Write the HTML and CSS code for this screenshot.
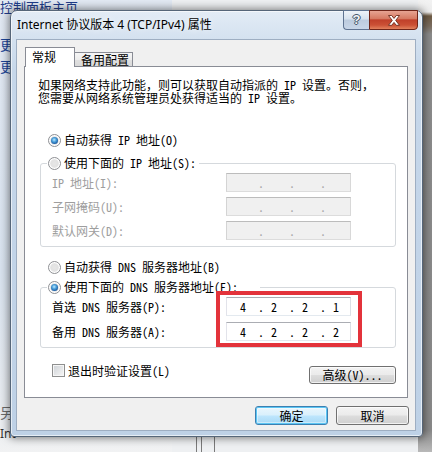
FILE: index.html
```html
<!DOCTYPE html>
<html>
<head>
<meta charset="utf-8">
<link rel="stylesheet" href="styles.css">
</head>
<body>
<div class="side">
  <div class="slink top">控制面板主页</div>
  <div class="slink l1">更</div>
  <div class="slink l2">更</div>
  <div class="slink l3">另</div>
  <div class="slink l4">Int</div>
</div>
<div class="rstrip"></div>
<div class="bline b1"></div>
<div class="bline b2"></div>
<div class="bline b3"></div>

<div class="win">
  <div class="titlebar">
    <span class="title">Internet 协议版本 4 (TCP/IPv4) 属性</span>
    <div class="caps">
      <div class="cap help">?</div>
      <div class="cap close">
        <svg width="14" height="11" viewBox="0 0 14 11"><path d="M1.5 0.5h3.2l2.3 2.9 2.3-2.9h3.2l-3.8 4.9 3.8 4.9h-3.2l-2.3-2.9-2.3 2.9h-3.2l3.8-4.9z" fill="#fff" stroke="#6a2a1c" stroke-width="0.9" stroke-linejoin="round"/></svg>
      </div>
    </div>
  </div>
  <div class="client">
    <div class="tabs">
      <div class="tab on">常规</div>
      <div class="tab">备用配置</div>
    </div>
    <div class="panel">
      <p class="desc">如果网络支持此功能，则可以获取自动指派的 IP 设置。否则，<br>您需要从网络系统管理员处获得适当的 IP 设置。</p>

      <div class="opt r1"><span class="radio on"></span><span>自动获得 IP 地址(O)</span></div>

      <div class="group">
        <div class="legend"><span class="radio"></span><span>使用下面的 IP 地址(S):</span></div>
        <div class="field first"><span class="lbl dim">IP 地址(I):</span>
          <span class="ip dis"><span class="n"></span><span class="d">.</span><span class="n"></span><span class="d">.</span><span class="n"></span><span class="d">.</span><span class="n"></span></span></div>
        <div class="field"><span class="lbl dim">子网掩码(U):</span>
          <span class="ip dis"><span class="n"></span><span class="d">.</span><span class="n"></span><span class="d">.</span><span class="n"></span><span class="d">.</span><span class="n"></span></span></div>
        <div class="field"><span class="lbl dim">默认网关(D):</span>
          <span class="ip dis"><span class="n"></span><span class="d">.</span><span class="n"></span><span class="d">.</span><span class="n"></span><span class="d">.</span><span class="n"></span></span></div>
      </div>

      <div class="opt r2"><span class="radio"></span><span>自动获得 DNS 服务器地址(B)</span></div>

      <div class="group g2">
        <div class="legend wide"><span class="radio on"></span><span>使用下面的 DNS 服务器地址(E):</span></div>
        <div class="field first"><span class="lbl">首选 DNS 服务器(P):</span>
          <span class="ip"><span class="n">4</span><span class="d">.</span><span class="n">2</span><span class="d">.</span><span class="n">2</span><span class="d">.</span><span class="n">1</span></span></div>
        <div class="field"><span class="lbl">备用 DNS 服务器(A):</span>
          <span class="ip"><span class="n">4</span><span class="d">.</span><span class="n">2</span><span class="d">.</span><span class="n">2</span><span class="d">.</span><span class="n">2</span></span></div>
        <div class="mark"></div>
      </div>

      <div class="checkrow">
        <span class="check"></span><span class="ctext">退出时验证设置(L)</span>
        <div class="btn adv">高级(V)...</div>
      </div>
    </div>
    <div class="btns">
      <div class="btn def">确定</div>
      <div class="btn">取消</div>
    </div>
  </div>
</div>
</body>
</html>
```

FILE: styles.css
```css
* { box-sizing: border-box; margin: 0; padding: 0; }
html, body { width: 432px; height: 452px; overflow: hidden; }
body {
  position: relative;
  background: #eef0f2;
  font: 12px/12px "Noto Sans Mono CJK SC", "Noto Sans CJK SC", sans-serif;
  color: #000;
}

/* desktop behind the dialog */
.side {
  position: absolute; left: 0; top: 0; width: 172px; height: 452px;
  background: linear-gradient(#e2e9f3, #d8e2ee 60%, #e6eaef 88%, #f1f2f3);
}
.slink { position: absolute; white-space: nowrap; font: 14px/16px "Noto Sans CJK SC", sans-serif; color: #1c4597; }
.slink.top { left: 0; top: 0; font-size: 13px; line-height: 13px; color: #1e3c8a; }
.slink.l1 { left: 0; top: 36px; }
.slink.l2 { left: 0; top: 58px; }
.slink.l3 { left: 0; top: 404px; color: #6a6a6a; }
.slink.l4 { left: 0; top: 427px; color: #333; font: 12px/14px "Noto Sans", sans-serif; }
.rstrip {
  position: absolute; left: 418px; top: 0; width: 14px; height: 452px;
  background: linear-gradient(#f2f2f2 0, #eeeeee 12px, #6e5b44 16px, #7c6e60 26px, #8c8c8c 34px, #8a8a8a 430px, #b9b9b9 452px);
}
.bline { position: absolute; top: 436px; width: 1px; height: 16px; background: #7a7a7a; }
.bline.b1 { left: 196px; }
.bline.b2 { left: 201px; }
.bline.b3 { left: 214px; }

/* window frame */
.win {
  position: absolute; left: 10px; top: 10px; width: 413px; height: 427px;
  border: 1px solid #566679;
  border-radius: 7px 7px 4px 4px;
  background: linear-gradient(180deg, #e3ecf6 0, #d5e2f0 26px, #c6d7ea 60px, #bed1e6 100%);
  box-shadow: 0 0 9px 1px rgba(0, 0, 0, .5), inset 0 0 0 1px rgba(255, 255, 255, .6);
  padding: 0 6px 5px 5px;
  display: flex; flex-direction: column;
}
.titlebar { height: 28px; display: flex; align-items: center; padding-left: 1px; }
.title {
  font: 12px/14px "Noto Sans", "Noto Sans CJK SC", sans-serif;
  color: #000; white-space: nowrap;
  text-shadow: 0 0 6px rgba(255, 255, 255, .95);
}
.caps {
  display: flex; align-self: flex-start;
  margin: -1px -2px 0 auto;
}
.cap { height: 20px; display: flex; align-items: center; justify-content: center; }
.help {
  width: 26px;
  border: 1px solid #5f7391; border-right: none;
  border-radius: 0 0 0 4px;
  background: linear-gradient(#eef3f9, #d6e1ee 45%, #bccbde 50%, #c8d6e8);
  font: bold 13px/14px "Liberation Sans", sans-serif; color: #f4f6f8;
  text-shadow: 0 0 1px #2e3e52, 1px 0 0 #4a5b70, -1px 0 0 #4a5b70, 0 1px 0 #4a5b70, 0 -1px 0 #4a5b70;
}
.close {
  width: 49px;
  border: 1px solid #6f2519;
  border-radius: 0 0 4px 0;
  background-color: #c8503a;
  background-image: linear-gradient(#e7a493, #d67a63 42%, #c0402a 50%, #cb5035 78%, #e2825e);
}

/* client area */
.client {
  flex: 1;
  border: 1px solid #9eaec2;
  background: #f0f0f0;
  padding: 7px 6px 0 7px;
  display: flex; flex-direction: column;
}
.tabs { display: flex; align-items: flex-end; height: 20px; }
.tab {
  height: 15px; width: 59px; margin-left: -1px;
  border: 1px solid #898c95; border-bottom: none;
  background: linear-gradient(#f6f6f6, #ececec 50%, #e0e0e0 50%, #d8d8d8);
  padding-left: 6px; line-height: 14px; white-space: nowrap;
}
.tab.on {
  position: relative; z-index: 2;
  height: 20px; width: 50px; margin-left: 1px;
  background: #fff; line-height: 18px;
}
.panel {
  position: relative; z-index: 1;
  margin-top: -1px;
  width: 384px; height: 332px;
  border: 1px solid #898c95;
  background: #fff;
}
.desc { margin: 11px 0 0 13px; white-space: nowrap; line-height: 13px; }

.opt { display: flex; align-items: center; gap: 3px; height: 16px; margin-left: 23px; white-space: nowrap; }
.opt.r1 { margin-top: 28px; }
.opt.r2 { margin-top: 12px; }

.radio {
  flex: none; position: relative;
  width: 13px; height: 13px; border-radius: 50%;
  border: 1px solid #8e9094;
  background: radial-gradient(circle at 50% 50%, #e6e6e6 0, #e2e2e2 45%, #f7f7f7 70%, #ffffff 100%);
  box-shadow: inset 0 0 0 1px #fff;
}
.radio.on::after {
  content: ""; position: absolute; left: 2px; top: 2px; width: 7px; height: 7px; border-radius: 50%;
  background: radial-gradient(circle at 45% 40%, #bfe9ff 0, #4ea3dc 35%, #1d5fa6 70%, #143e72 100%);
}

.group {
  position: relative;
  margin: 15px 0 0 15px;
  width: 356px;
  border: 1px solid #d5d9dd;
  border-radius: 3px;
  padding-bottom: 6px;
}
.g2 { margin-top: 12px; }
.legend {
  display: flex; align-items: center; gap: 3px;
  width: max-content; height: 16px;
  margin: -9px 0 0 6px; padding: 0 3px 0 1px;
  background: #fff; white-space: nowrap;
}
.legend.wide { padding-right: 22px; }

.field { display: flex; align-items: center; height: 19px; margin-top: 5px; padding-left: 11px; white-space: nowrap; }
.field.first { margin-top: 2px; }
.g2 .field { margin-top: 6px; }
.g2 .field.first { margin-top: 2px; }
.lbl { width: 174px; }
.dim { color: #9e9e9e; }

.ip {
  display: flex; align-items: center;
  width: 125px; height: 19px;
  padding-left: 6px;
  border: 1px solid; border-color: #abadb3 #dbdfe6 #e3e9ef #e2e3ea;
  background: #fff;
}
.ip.dis { background: #f0f0f0; border-color: #bcbcbc #d8d8d8 #dcdcdc #d4d4d4; color: #a8a8a8; }
.ip .n { width: 20px; text-align: center; }
.ip .d { width: 11px; text-align: right; }

.mark {
  position: absolute; left: 175px; top: 3px; width: 146px; height: 56px;
  border: 4px solid #e3333b;
}

.checkrow { display: flex; align-items: flex-start; margin: 16px 11px 0 27px; }
.check {
  flex: none; width: 13px; height: 13px;
  border: 1px solid #8e8f8f;
  background: linear-gradient(135deg, #cdd1d6, #f7f7f7);
  box-shadow: inset 0 0 0 1px #f6f6f6;
}
.ctext { margin-left: 3px; line-height: 13px; white-space: nowrap; }

.btn {
  height: 19px; width: 73px;
  border: 1px solid #707070; border-radius: 3px;
  background: linear-gradient(#f3f3f3, #ebebeb 48%, #dddddd 52%, #cfcfcf);
  box-shadow: inset 0 0 0 1px rgba(255, 255, 255, .7);
  text-align: center; line-height: 17px; white-space: nowrap;
}
.btn.adv { margin-left: auto; margin-top: 2px; width: 87px; height: 18px; line-height: 16px; }
.btn.def {
  border-color: #3c7fb1;
  background: linear-gradient(#eaf6fd, #d9f0fc 48%, #bee6fd 52%, #a7d9f5);
  box-shadow: inset 0 0 0 1px #5bc6f4, inset 0 0 0 2px rgba(255, 255, 255, .4);
}
.btns { display: flex; justify-content: flex-end; gap: 8px; margin-top: 8px; }
```
